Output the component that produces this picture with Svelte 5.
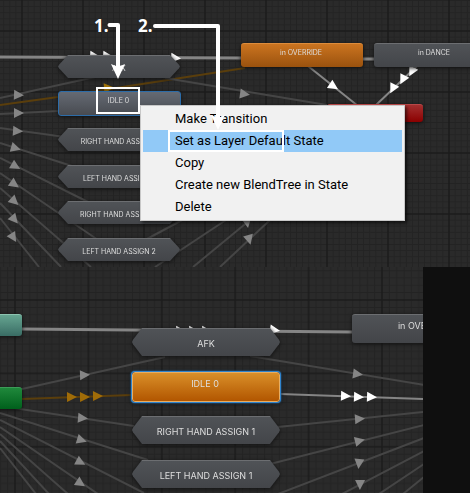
<script>
  const dim = '#454545';
  const lit = '#858585';
  const amber = '#5a3e0c';

  const upper = {
    id: 'upper',
    grid: { size: 61, x: 21, y: 30 },
    lines: [
      [0, 57, 241, 58, lit, 3], [363, 59, 374, 59, lit, 3],
      [0, 98, 95, 77, dim, 2], [0, 105, 58, 97, amber, 2], [58, 97, 245, 68, amber, 2],
      [0, 114, 58, 111, dim, 2], [0, 128, 65, 137, dim, 2], [0, 143, 75, 167, dim, 2],
      [0, 158, 90, 203, dim, 2], [0, 173, 98, 240, dim, 2], [0, 188, 91, 267, dim, 2],
      [0, 203, 61, 267, dim, 2], [0, 218, 39, 267, dim, 2],
      [165, 78, 327, 105, dim, 2], [147, 239, 184, 219, dim, 2],
      [155, 267, 226, 220, dim, 2], [193, 267, 250, 220, dim, 2], [220, 267, 270, 220, dim, 2],
      [308, 66, 358, 106, lit, 2], [417, 66, 375, 106, lit, 2]
    ],
    arrows: [
      [18, 95, 2, '#858585'], [18, 113, 0, '#858585'], [17, 131, 4, '#858585'],
      [15, 148, 16, '#858585'], [15, 166, 30, '#858585'], [14, 184, 35, '#858585'],
      [14, 201, 43, '#858585'], [14, 219, 50, '#858585'], [13, 237, 58, '#858585'],
      [94, 56, 5, '#fff'], [107, 56, 5, '#fff'], [175, 58, 5, '#fff'],
      [108, 88, -4, '#9c7008'], [244, 94, 8, '#858585'],
      [333, 86, 33, '#fff'], [412, 71, 117, '#fff'], [403, 79, 117, '#fff'], [393, 88, 117, '#fff'],
      [247, 222, 80, '#858585'], [249, 239, 75, '#858585']
    ],
    nodes: [
      ['AFK', 'hex', 58, 55, 122, 23],
      ['IDLE 0', 'rect grey picked', 58, 91, 123, 25],
      ['RIGHT HAND ASSIGN 1', 'hex', 58, 128, 122, 23],
      ['LEFT HAND ASSIGN 1', 'hex', 58, 165, 122, 23],
      ['RIGHT HAND ASSIGN 2', 'hex', 58, 201, 122, 23],
      ['LEFT HAND ASSIGN 2', 'hex', 58, 238, 122, 23],
      ['in OVERRIDE', 'rect rust', 241, 43, 122, 24],
      ['in DANCE', 'rect grey', 374, 43, 122, 24],
      ['', 'rect red', 327, 104, 96, 18]
    ]
  };

  const lower = {
    id: 'lower',
    grid: { size: 73.4, x: 14, y: 32 },
    lines: [
      [22, 62, 352, 65, lit, 3],
      [22, 122, 165, 90, dim, 2], [22, 132, 132, 128, amber, 2],
      [0, 139, 134, 159, dim, 2], [0, 146, 148, 193, dim, 2], [0, 153, 144, 226, dim, 2],
      [0, 160, 98, 227, dim, 2], [0, 167, 68, 227, dim, 2], [0, 174, 49, 227, dim, 2],
      [0, 181, 36, 227, dim, 2],
      [250, 89, 424, 118, dim, 2], [280, 127, 424, 132, lit, 2], [278, 160, 424, 145, dim, 2],
      [270, 197, 424, 158, dim, 2], [278, 227, 424, 171, dim, 2], [342, 227, 424, 184, dim, 2],
      [379, 227, 424, 197, dim, 2], [403, 227, 424, 210, dim, 2]
    ],
    arrows: [
      [84, 108, -2, '#858585'], [71, 130, -1, '#a06c08'], [84, 130, -1, '#a06c08'], [97, 129, -1, '#a06c08'],
      [82, 151, 5, '#858585'], [81, 173, 17, '#858585'], [80, 195, 28, '#858585'], [80, 216, 34, '#858585'],
      [180, 64, 2, '#fff'], [193, 64, 2, '#fff'], [206, 64, 2, '#fff'], [274, 63, 8, '#fff'],
      [357, 107, 8, '#858585'], [345, 129, 2, '#fff'], [358, 130, 2, '#fff'], [371, 130, 2, '#fff'],
      [359, 152, -4, '#858585'], [359, 174, -14, '#858585'], [359, 196, 96, '#858585'], [360, 217, 91, '#858585']
    ],
    nodes: [
      ['AFK', 'hex', 132, 61, 148, 28],
      ['IDLE 0', 'rect orange picked', 132, 105, 148, 30],
      ['RIGHT HAND ASSIGN 1', 'hex', 132, 149, 148, 28],
      ['LEFT HAND ASSIGN 1', 'hex', 132, 193, 148, 28],
      ['in OVERRIDE', 'rect grey', 352, 47, 148, 29],
      ['', 'rect teal', -126, 47, 148, 22],
      ['', 'rect green', -126, 120, 148, 22]
    ]
  };

  const items = ['Make Transition', 'Set as Layer Default State', 'Copy', 'Create new BlendTree in State', 'Delete'];
  const steps = [1, 2, 3, 4, 5, 6, 7, 8, 9];
</script>

{#snippet graph(g)}
  <svg class="wires" aria-hidden="true">
    <defs>
      <pattern id={g.id} x={g.grid.x} y={g.grid.y} width={g.grid.size} height={g.grid.size} patternUnits="userSpaceOnUse">
        {#each steps as s}
          <path d="M{(s * g.grid.size) / 10 + 1} 0v{g.grid.size}M0 {(s * g.grid.size) / 10 + 1}h{g.grid.size}" stroke="#232323" />
        {/each}
        <path d="M1 0v{g.grid.size}M0 1h{g.grid.size}" stroke="#1b1b1b" stroke-width="1.5" />
      </pattern>
    </defs>
    <rect width="100%" height="100%" fill="url(#{g.id})" />
    {#each g.lines as [x1, y1, x2, y2, stroke, w]}
      <line {x1} {y1} {x2} {y2} {stroke} stroke-width={w} />
    {/each}
    {#each g.arrows as [x, y, turn, fill]}
      <path d="M6 0L-4 5V-5z" transform="translate({x} {y}) rotate({turn})" {fill} />
    {/each}
  </svg>
  {#each g.nodes as [label, kind, x, y, w, h]}
    <div class="node {kind}" style="left:{x}px;top:{y}px;width:{w}px;height:{h}px">
      <div class="face">{label}</div>
    </div>
  {/each}
{/snippet}

<main>
  <section class="canvas upper">
    {@render graph(upper)}

    <div class="menu" role="menu">
      {#each items as item, i}
        <button type="button" role="menuitem" class:active={i === 1}>{item}</button>
      {/each}
    </div>

    <svg class="wires" aria-hidden="true">
      <g fill="none" stroke="#fff">
        <path d="M109.500 25H118V68" stroke-width="4" stroke-linejoin="round" stroke-linecap="round" />
        <path d="M155 26H218V120" stroke-width="4" stroke-linejoin="round" stroke-linecap="round" />
        <rect x="97" y="88" width="42" height="25" stroke-width="2" />
        <rect x="169" y="131" width="114" height="20" stroke-width="2" />
      </g>
      <path d="M111 64L118 67L125 64L118 79z" fill="#fff" />
      <path d="M211 115L218 118L225 115L218 130z" fill="#fff" />
    </svg>
    <span class="mark first">1.</span>
    <span class="mark second">2.</span>
  </section>

  <div class="bottom">
    <section class="canvas lower">
      {@render graph(lower)}
    </section>
    <aside></aside>
  </div>
</main>

<style>
  :global(body) {
    margin: 0;
    background: #0f0f0f;
  }

  main {
    display: grid;
    grid-template-rows: 267fr 226fr;
    min-height: 100vh;
    font-family: Inter, 'Liberation Sans', sans-serif;
  }

  .canvas {
    position: relative;
    overflow: hidden;
    background: #2a2a2a;
  }

  .bottom {
    display: grid;
    grid-template-columns: 9fr 1fr;
  }

  .lower {
    font-size: 9px;
  }

  .upper {
    font-size: 7px;
  }

  aside {
    background: #0f0f0f;
  }

  .wires {
    position: absolute;
    inset: 0;
    width: 100%;
    height: 100%;
  }

  .node {
    position: absolute;
    color: #dedede;
    filter: drop-shadow(0 1px 2px #111);
  }

  .face {
    box-sizing: border-box;
    display: flex;
    justify-content: center;
    height: 100%;
    white-space: nowrap;
    border-top: 1px solid #6c6e71;
    background: linear-gradient(#505357, #434549);
  }

  .hex .face {
    align-items: center;
    padding-top: 2px;
    clip-path: polygon(10px 0, calc(100% - 10px) 0, calc(100% - 1px) 42%, 100% 50%, calc(100% - 1px) 58%, calc(100% - 10px) 100%, 10px 100%, 1px 58%, 0 50%, 1px 42%);
  }

  .rect .face {
    padding: 3px 2px 0 0;
    line-height: 12px;
    border-radius: 3px;
  }

  .lower .rect .face {
    padding-top: 5px;
  }

  .picked .face {
    border: 1px solid #2c6ca8;
  }

  .grey.picked .face {
    background: linear-gradient(#656a73, #484b51);
  }

  .rust .face {
    border-color: #dc8c3c;
    background: linear-gradient(#cb7420, #9a520e);
  }

  .orange .face {
    border-color: #e8ad62;
    background: linear-gradient(#d98f29, #b25600);
    box-shadow: 0 0 0 1px #2f83cc, 0 0 2px 1px #2f83cc;
  }

  .red .face {
    border-color: #b84848;
    background: linear-gradient(#a33030, #8b0000);
  }

  .teal .face {
    border-color: #8cc4b0;
    background: linear-gradient(#66a591, #396c64);
  }

  .green .face {
    border-color: #3c9c58;
    background: linear-gradient(#1f883b, #00601c);
  }

  .menu {
    position: absolute;
    left: 140px;
    top: 105px;
    box-sizing: border-box;
    display: flex;
    flex-direction: column;
    width: 265px;
    padding: 2px;
    border: 1px solid #c8c8c8;
    background: #f1f1f1;
    box-shadow: 2px 2px 3px #0009;
  }

  button {
    height: 22px;
    padding: 0 0 0 32px;
    border: 0;
    background: none;
    color: #000;
    font: 13px/22px Roboto, 'Noto Sans', sans-serif;
    text-align: left;
    white-space: nowrap;
  }

  .active {
    background: #91c9f7;
  }

  .mark {
    position: absolute;
    top: 14px;
    color: #fff;
    font: bold 17px/24px 'Noto Sans', 'Open Sans', sans-serif;
  }

  .first {
    left: 94px;
  }

  .second {
    left: 138px;
  }
</style>
